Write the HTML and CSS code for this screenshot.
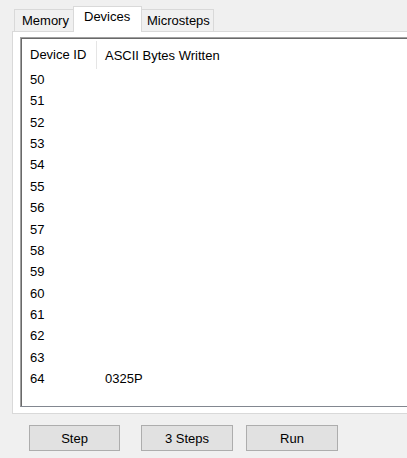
FILE: index.html
```html
<!DOCTYPE html>
<html>
<head>
<meta charset="utf-8">
<link rel="stylesheet" href="styles.css">
</head>
<body>
<div class="window">
  <div class="tabs">
    <div class="tab">Memory</div>
    <div class="tab selected">Devices</div>
    <div class="tab">Microsteps</div>
  </div>
  <div class="panel">
    <div class="list">
      <div class="header">
        <div class="col c1">Device ID</div>
        <div class="col c2">ASCII Bytes Written</div>
      </div>
      <div class="rows">
        <div class="row"><span class="c1">50</span><span class="c2"></span></div>
        <div class="row"><span class="c1">51</span><span class="c2"></span></div>
        <div class="row"><span class="c1">52</span><span class="c2"></span></div>
        <div class="row"><span class="c1">53</span><span class="c2"></span></div>
        <div class="row"><span class="c1">54</span><span class="c2"></span></div>
        <div class="row"><span class="c1">55</span><span class="c2"></span></div>
        <div class="row"><span class="c1">56</span><span class="c2"></span></div>
        <div class="row"><span class="c1">57</span><span class="c2"></span></div>
        <div class="row"><span class="c1">58</span><span class="c2"></span></div>
        <div class="row"><span class="c1">59</span><span class="c2"></span></div>
        <div class="row"><span class="c1">60</span><span class="c2"></span></div>
        <div class="row"><span class="c1">61</span><span class="c2"></span></div>
        <div class="row"><span class="c1">62</span><span class="c2"></span></div>
        <div class="row"><span class="c1">63</span><span class="c2"></span></div>
        <div class="row"><span class="c1">64</span><span class="c2">0325P</span></div>
      </div>
    </div>
  </div>
  <div class="buttons">
    <div class="btn b1">Step</div>
    <div class="btn b2">3 Steps</div>
    <div class="btn b3">Run</div>
  </div>
</div>
</body>
</html>
```

FILE: styles.css
```css
html, body {
  margin: 0;
  padding: 0;
  background: #f0f0f0;
  overflow: hidden;
}
body {
  width: 407px;
  height: 458px;
  font-family: "Liberation Sans", Arial, sans-serif;
  font-size: 13px;
  color: #000;
}
.window {
  box-sizing: border-box;
  padding-left: 12px;
  width: 407px;
}
.tabs {
  display: flex;
  align-items: flex-end;
  height: 32px;
  padding-left: 2px;
  position: relative;
  z-index: 2;
}
.tab {
  box-sizing: border-box;
  height: 22px;
  margin-bottom: 1px;
  border: 1px solid #d9d9d9;
  border-bottom: none;
  background: #f0f0f0;
  padding: 0 7px;
  line-height: 21px;
  white-space: nowrap;
}
.tab:first-child { width: 60px; }
.tab:last-child { width: 73px; border-left: none; padding-left: 6px; }
.tab.selected {
  height: 26px;
  margin: 0 -1px 0 -1px;
  width: 69px;
  background: #fff;
  line-height: 20px;
  padding-left: 10px;
  position: relative;
  z-index: 3;
}
.panel {
  box-sizing: border-box;
  margin-top: -1px;
  background: #fff;
  border: 1px solid #d9d9d9;
  border-right: none;
  height: 383px;
  padding: 5px 0 0 7px;
}
.list {
  box-sizing: border-box;
  height: 370px;
  border-top: 1px solid #a0a0a0;
  border-left: 1px solid #a0a0a0;
  border-bottom: 1px solid #828790;
  box-shadow: inset 1px 1px 0 #696969;
  background: #fff;
}
.header {
  display: flex;
  height: 30px;
  padding-top: 1px;
  box-sizing: border-box;
}
.header .col {
  line-height: 29px;
  padding-top: 2px;
  box-sizing: border-box;
}
.c1 {
  width: 76px;
  padding-left: 9px;
  box-sizing: border-box;
  flex: none;
}
.header .c1 {
  border-right: 1px solid #e5e5e5;
  height: 28px;
  margin-top: 2px;
  line-height: 27px;
  padding-top: 0;
}
.c2 {
  padding-left: 8px;
  box-sizing: border-box;
}
.rows {
  padding-top: 1px;
}
.row {
  display: flex;
  height: 21.36px;
  line-height: 21.36px;
}
.buttons {
  display: flex;
  padding-left: 17px;
  margin-top: 11px;
}
.btn {
  box-sizing: border-box;
  width: 91px;
  height: 26px;
  background: #e1e1e1;
  border: 1px solid #adadad;
  text-align: center;
  line-height: 25px;
}
.b1 { margin-right: 21px; }
.b2 { margin-right: 13px; width: 92px; }
.b3 { width: 92px; }
```
